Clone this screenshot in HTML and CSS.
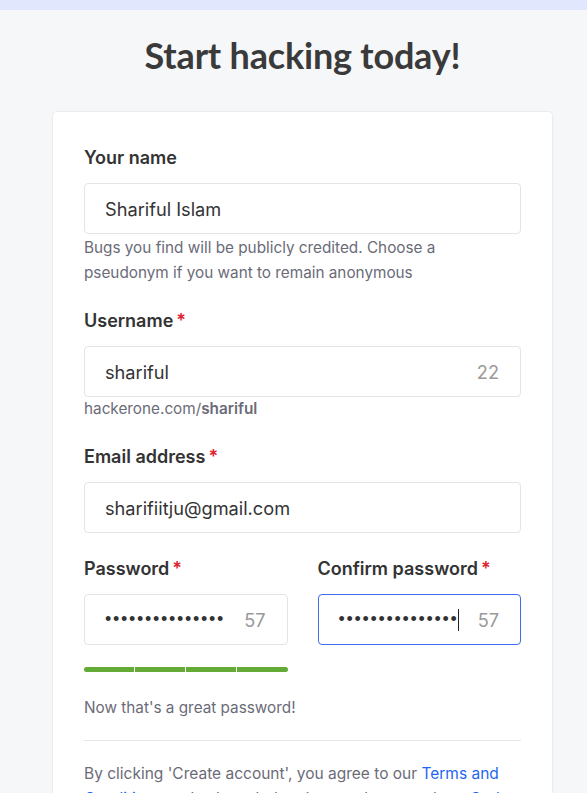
FILE: index.html
```html
<!DOCTYPE html>
<html lang="en">
<head>
<meta charset="utf-8">
<title>Start hacking today!</title>
<link rel="stylesheet" href="styles.css">
</head>
<body>
<div class="topband"></div>
<main class="page">
  <h1 class="title">Start hacking today!</h1>
  <section class="card">
    <div class="field">
      <label class="label">Your name</label>
      <div class="input"><span class="value">Shariful Islam</span></div>
      <p class="help">Bugs you find will be publicly credited. Choose a pseudonym if you want to remain anonymous</p>
    </div>
    <div class="field">
      <label class="label">Username<span class="req">*</span></label>
      <div class="input"><span class="value">shariful</span><span class="count">22</span></div>
      <p class="help tight">hackerone.com/<b>shariful</b></p>
    </div>
    <div class="field">
      <label class="label">Email address<span class="req">*</span></label>
      <div class="input"><span class="value">sharifiitju@gmail.com</span></div>
    </div>
    <div class="row">
      <div class="field col">
        <label class="label">Password<span class="req">*</span></label>
        <div class="input"><span class="dots">&bull;&bull;&bull;&bull;&bull;&bull;&bull;&bull;&bull;&bull;&bull;&bull;&bull;&bull;&bull;</span><span class="count">57</span></div>
        <div class="strength"><span></span><span></span><span></span><span></span></div>
        <p class="help great">Now that's a great password!</p>
      </div>
      <div class="field col">
        <label class="label">Confirm password<span class="req">*</span></label>
        <div class="input focus"><span class="dots">&bull;&bull;&bull;&bull;&bull;&bull;&bull;&bull;&bull;&bull;&bull;&bull;&bull;&bull;&bull;<i class="caret"></i></span><span class="count">57</span></div>
      </div>
    </div>
    <hr class="divider">
    <p class="terms">By clicking 'Create account', you agree to our <a href="#">Terms and Conditions</a> and acknowledge that you have read our <a href="#">Code of Conduct</a>, <a href="#">Privacy Policy</a> and <a href="#">Disclosure Guidelines</a>.</p>
  </section>
</main>
</body>
</html>
```
FILE: styles.css
```css
* { box-sizing: border-box; }
html, body { margin: 0; padding: 0; }
body {
  background: #f6f7f9;
  font-family: Inter, "Noto Sans", sans-serif;
  color: #333333;
  overflow: hidden;
  height: 793px;
}
.topband { height: 10px; background: #e1e8fd; }
.page { padding: 0 35px 0 53px; }
.title {
  margin: 0;
  padding-top: 23px;
  height: 102px;
  width: 499px;
  text-align: center;
  font-family: Lato, "Noto Sans", sans-serif;
  font-size: 36px;
  line-height: 44px;
  font-weight: 700;
  letter-spacing: -0.2px;
  color: #3a3a3a;
}
.card {
  width: 499px;
  background: #fff;
  border-radius: 4px;
  box-shadow: 0 0 0 1px #ececef, 0 1px 3px rgba(0,0,0,0.06);
  padding: 34px 31px 40px 31px;
}
.field { display: flex; flex-direction: column; margin-bottom: 24px; min-width: 0; }
.label {
  font-size: 18px;
  line-height: 24px;
  font-weight: 600;
  color: #333;
  margin-bottom: 13px;
}
.req { color: #e0212e; margin-left: 3px; }
.input {
  height: 51px;
  border: 1px solid #e4e4e7;
  border-radius: 4px;
  display: flex;
  align-items: center;
  justify-content: space-between;
  padding: 0 21px 0 20px;
  font-size: 18.2px;
  color: #333;
}
.input.focus { border-color: #3c6df0; }
.count { color: #9a9a9a; }
.dots {
  font-family: "Liberation Sans", Arial, sans-serif;
  font-size: 18px;
  letter-spacing: 1.7px;
  color: #333;
  display: inline-flex;
  align-items: center;
}
.caret {
  display: inline-block;
  width: 1px;
  height: 22px;
  background: #222;
  margin-left: -1px;
}
.help {
  margin: 1px 0 0 0;
  font-size: 15.3px;
  line-height: 25px;
  color: #6b6b78;
}
.help.tight { line-height: 24px; margin-top: 0; }
.help b { font-weight: 600; color: #6b6b78; }
.row {
  display: grid;
  grid-template-columns: minmax(0, 1fr) minmax(0, 1fr);
  column-gap: 30px;
}
.col { margin-bottom: 0; }
.strength {
  display: flex;
  gap: 1px;
  margin-top: 22px;
  height: 5px;
}
.strength span { flex: 1; background: #63ab36; }
.strength span:first-child { border-radius: 3px 0 0 3px; }
.strength span:last-child { border-radius: 0 3px 3px 0; }
.great { margin-top: 23px; white-space: nowrap; overflow: visible; }
.divider {
  border: 0;
  border-top: 1px solid #e6e6e9;
  margin: 20px 0 0 0;
}
.terms {
  margin: 20px 0 0 0;
  font-size: 15.5px;
  line-height: 25px;
  color: #6b6b78;
}
.terms a { color: #1f66f2; text-decoration: none; }
```
